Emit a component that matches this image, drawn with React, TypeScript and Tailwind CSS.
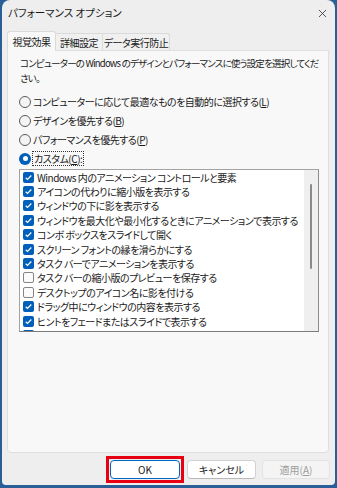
import { X } from "lucide-react";

const effects: [string, boolean][] = [
  ["Windows 内のアニメーション コントロールと要素", true],
  ["アイコンの代わりに縮小版を表示する", true],
  ["ウィンドウの下に影を表示する", true],
  ["ウィンドウを最大化や最小化するときにアニメーションで表示する", true],
  ["コンボ ボックスをスライドして開く", true],
  ["スクリーン フォントの縁を滑らかにする", true],
  ["タスク バーでアニメーションを表示する", true],
  ["タスク バーの縮小版のプレビューを保存する", false],
  ["デスクトップのアイコン名に影を付ける", false],
  ["ドラッグ中にウィンドウの内容を表示する", true],
  ["ヒントをフェードまたはスライドで表示する", true],
  ["プレビューを有効にする", true],
];

function Check({ on }: { on: boolean }) {
  if (!on) {
    return <span className="h-[11px] w-[11px] shrink-0 rounded-[2px] border border-[#858585] bg-[#fbfbfb]" />;
  }
  return (
    <span className="flex h-[11px] w-[11px] shrink-0 items-center justify-center rounded-[2px] bg-[#005fb8]">
      <svg width="9" height="9" viewBox="0 0 9 9">
        <path d="M1.7 4.7 3.5 6.4 7.3 2.5" fill="none" stroke="white" strokeWidth="1.2" />
      </svg>
    </span>
  );
}

function Radio({ on }: { on: boolean }) {
  if (on) {
    return (
      <span className="flex h-[12px] w-[12px] shrink-0 items-center justify-center rounded-full bg-[#005fb8]">
        <span className="h-[5px] w-[5px] rounded-full bg-white" />
      </span>
    );
  }
  return <span className="h-[12px] w-[12px] shrink-0 rounded-full border border-[#5c5c5c] bg-[#f4f4f4]" />;
}

export default function App() {
  return (
    <div className="flex h-[488px] w-[337px] bg-[#2a5e97] pb-[3px] pl-[2px] pr-[3px] font-['Noto_Sans_CJK_JP',sans-serif] text-[10px] tracking-[-0.5px] text-[#1a1a1a] [font-feature-settings:'palt']">
      <div className="flex flex-1 flex-col rounded-t-[8px] rounded-b-[4px] bg-[#eeeeee]">
        {/* Title bar */}
        <div className="flex h-[26px] items-center justify-between pl-[6px] pr-[6px]">
          <span className="text-[10.5px] tracking-normal">パフォーマンス オプション</span>
          <X className="h-[13px] w-[13px] text-[#222]" strokeWidth={1.4} />
        </div>

        {/* Tabs */}
        <div className="flex h-[24px] items-end whitespace-nowrap pl-[5px]">
          <div className="relative z-10 -mb-px flex h-[20px] w-[49px] items-center justify-center rounded-t-[3px] border border-b-0 border-[#dadada] bg-[#f8f8f8]">
            視覚効果
          </div>
          <div className="flex h-[17px] w-[47px] items-center justify-center border border-b-0 border-l-0 border-[#dadada] bg-[#f0f0f0]">
            詳細設定
          </div>
          <div className="flex h-[17px] w-[67px] items-center justify-center rounded-tr-[3px] border border-b-0 border-l-0 border-[#dadada] bg-[#f0f0f0]">
            データ実行防止
          </div>
        </div>

        {/* Panel */}
        <div className="ml-[5px] mr-[6px] flex h-[403px] flex-col rounded-b-[4px] border border-[#dfdfdf] bg-[#f8f8f8] pl-[11px] pr-[9px] pt-[5px]">
          <p className="whitespace-nowrap pl-px text-[9.5px] leading-[15px] tracking-[-0.8px]">
            コンピューターの Windows のデザインとパフォーマンスに使う設定を選択してくだ
            <br />
            さい。
          </p>

          <div className="mt-[6px] flex flex-col">
            <div className="flex h-[19px] items-center gap-[2px]">
              <Radio on={false} />
              <span>
                コンピューターに応じて最適なものを自動的に選択する(<u>L</u>)
              </span>
            </div>
            <div className="flex h-[19px] items-center gap-[2px]">
              <Radio on={false} />
              <span>
                デザインを優先する(<u>B</u>)
              </span>
            </div>
            <div className="flex h-[19px] items-center gap-[2px]">
              <Radio on={false} />
              <span>
                パフォーマンスを優先する(<u>P</u>)
              </span>
            </div>
            <div className="flex h-[19px] items-center gap-[1px]">
              <Radio on={true} />
              <span className="border border-dotted border-[#333] px-px leading-[13px]">
                カスタム(<u>C</u>):
              </span>
            </div>
          </div>

          {/* Effects list */}
          <div className="mt-px flex h-[163px] overflow-hidden border border-[#a3a3a3] border-b-[#7c7c7c] border-r-[#8c8c8c] bg-white">
            <div className="flex flex-1 flex-col overflow-hidden">
              {effects.map(([label, on]) => (
                <div key={label} className="flex h-[14.4px] shrink-0 items-center gap-[3px] whitespace-nowrap pl-[3px]">
                  <Check on={on} />
                  <span>{label}</span>
                </div>
              ))}
            </div>
            <div className="flex w-[14px] flex-col items-center bg-[#efefef] pt-[14px]">
              <span className="h-[85px] w-[2px] rounded-full bg-[#8a8a8a]" />
            </div>
          </div>
        </div>

        {/* Buttons */}
        <div className="mt-[3px] flex items-center pl-[104px] tracking-normal">
          <div className="border-[3px] border-[#e60012] p-px">
            <button className="flex h-[19px] w-[70px] items-center justify-center rounded-[4px] border border-[#0067c0] bg-white">
              OK
            </button>
          </div>
          <button className="ml-[3px] flex h-[19px] w-[69px] items-center justify-center rounded-[4px] border border-[#d2d2d2] border-b-[#b8b8b8] bg-white">
            キャンセル
          </button>
          <button className="ml-[6px] flex h-[19px] w-[68px] items-center justify-center rounded-[4px] border border-[#e3e3e3] bg-[#f4f4f4] text-[#9d9d9d]">
            適用(<u>A</u>)
          </button>
        </div>
      </div>
    </div>
  );
}
